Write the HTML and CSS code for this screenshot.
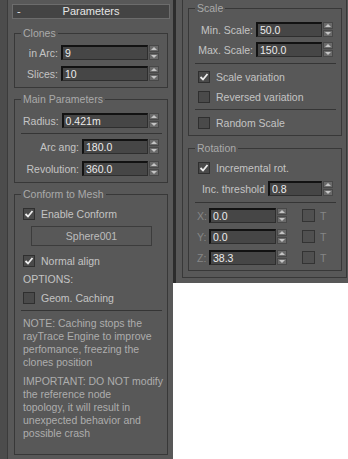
FILE: index.html
```html
<!DOCTYPE html>
<html lang="en">
<head>
    <meta charset="UTF-8">
    <title>Parameters</title>
    <link rel="stylesheet" href="styles.css">
</head>
<body>
<div class="app">
    <div class="side left">
        <div class="gutter"></div>
        <div class="rollout">
            <div class="roll-head">
                <span class="minus">-</span>
                <span class="roll-title">Parameters</span>
            </div>

            <fieldset class="group clones">
                <legend>Clones</legend>
                <div class="row mt5">
                    <label>in Arc:</label>
                    <div class="field w87">9</div>
                    <div class="spin"><span class="up"></span><span class="down"></span></div>
                </div>
                <div class="row mt6">
                    <label>Slices:</label>
                    <div class="field w87">10</div>
                    <div class="spin"><span class="up"></span><span class="down"></span></div>
                </div>
            </fieldset>

            <fieldset class="group main">
                <legend>Main Parameters</legend>
                <div class="row mt7">
                    <label>Radius:</label>
                    <div class="field w87">0.421m</div>
                    <div class="spin"><span class="up"></span><span class="down"></span></div>
                </div>
                <div class="sep sep-a"></div>
                <div class="row">
                    <label>Arc ang:</label>
                    <div class="field w66">180.0</div>
                    <div class="spin"><span class="up"></span><span class="down"></span></div>
                </div>
                <div class="row mt7">
                    <label>Revolution:</label>
                    <div class="field w66">360.0</div>
                    <div class="spin"><span class="up"></span><span class="down"></span></div>
                </div>
            </fieldset>

            <fieldset class="group conform">
                <legend>Conform to Mesh</legend>
                <div class="check mt6">
                    <span class="box on"><svg width="10" height="10" viewBox="0 0 10 10"><polyline points="1.5,5 4,7.5 8.5,2" /></svg></span>
                    <span>Enable Conform</span>
                </div>
                <div class="pick">Sphere001</div>
                <div class="check mt8">
                    <span class="box on"><svg width="10" height="10" viewBox="0 0 10 10"><polyline points="1.5,5 4,7.5 8.5,2" /></svg></span>
                    <span>Normal align</span>
                </div>
                <div class="opts">OPTIONS:</div>
                <div class="check mt5">
                    <span class="box"></span>
                    <span>Geom. Caching</span>
                </div>
                <div class="sep sep-b"></div>
                <p class="note">NOTE: Caching stops the<br>rayTrace Engine to improve<br>perfomance, freezing the<br>clones position</p>
                <p class="note">IMPORTANT: DO NOT modify<br>the reference node<br>topology, it will result in<br>unexpected behavior and<br>possible crash</p>
            </fieldset>
        </div>
    </div>

    <div class="side right">
        <div class="frame">
            <fieldset class="group scale">
                <legend>Scale</legend>
                <div class="row mt7">
                    <label>Min. Scale:</label>
                    <div class="field w66">50.0</div>
                    <div class="spin"><span class="up"></span><span class="down"></span></div>
                </div>
                <div class="row mt5">
                    <label>Max. Scale:</label>
                    <div class="field w66">150.0</div>
                    <div class="spin"><span class="up"></span><span class="down"></span></div>
                </div>
                <div class="sep sep-c"></div>
                <div class="check ind">
                    <span class="box on"><svg width="10" height="10" viewBox="0 0 10 10"><polyline points="1.5,5 4,7.5 8.5,2" /></svg></span>
                    <span>Scale variation</span>
                </div>
                <div class="check ind mt7">
                    <span class="box"></span>
                    <span>Reversed variation</span>
                </div>
                <div class="sep sep-c"></div>
                <div class="check ind">
                    <span class="box"></span>
                    <span>Random Scale</span>
                </div>
            </fieldset>

            <fieldset class="group rotation">
                <legend>Rotation</legend>
                <div class="check ind mt6">
                    <span class="box on"><svg width="10" height="10" viewBox="0 0 10 10"><polyline points="1.5,5 4,7.5 8.5,2" /></svg></span>
                    <span>Incremental rot.</span>
                </div>
                <div class="row mt7">
                    <label>Inc. threshold</label>
                    <div class="field w54">0.8</div>
                    <div class="spin"><span class="up"></span><span class="down"></span></div>
                </div>
                <div class="sep sep-d"></div>
                <div class="axis">
                    <label>X:</label>
                    <div class="field w67">0.0</div>
                    <div class="spin"><span class="up"></span><span class="down"></span></div>
                    <span class="box dim"></span>
                    <span class="t">T</span>
                </div>
                <div class="axis mt6">
                    <label>Y:</label>
                    <div class="field w67">0.0</div>
                    <div class="spin"><span class="up"></span><span class="down"></span></div>
                    <span class="box dim"></span>
                    <span class="t">T</span>
                </div>
                <div class="axis mt6">
                    <label>Z:</label>
                    <div class="field w67">38.3</div>
                    <div class="spin"><span class="up"></span><span class="down"></span></div>
                    <span class="box dim"></span>
                    <span class="t">T</span>
                </div>
            </fieldset>
        </div>
    </div>
</div>
</body>
</html>
```

FILE: styles.css
```css
*{
    margin: 0;
    padding: 0;
    box-sizing: border-box;
}
body{
    background-color: #fff;
    font-family: "Liberation Sans", Arial, sans-serif;
    font-size: 10.5px;
    color: #c4c4c4;
}
.app{
    display: flex;
    align-items: flex-start;
}
.side{
    background-color: #585858;
}
.left{
    width: 173px;
    height: 459px;
    display: flex;
}
.gutter{
    width: 8px;
    background-color: #4c4c4c;
    border-right: 1px solid #3b3b3b;
}
.rollout{
    width: 165px;
    padding: 4px 3px 0 4px;
}
.roll-head{
    height: 15px;
    display: grid;
    grid-template-columns: 1fr auto 1fr;
    align-items: center;
    background-color: #444;
    border: 1px solid #6c6c6c;
    color: #e6e6e6;
    font-size: 11px;
    line-height: 13px;
}
.minus{
    padding-left: 4px;
}

/* group boxes */
.group{
    border: 1px solid #383838;
    padding: 0 8px 6px 8px;
    min-width: 0;
}
.group legend{
    padding: 0 2px;
    margin-left: -2px;
    line-height: 13px;
    color: #aaa;
}
.left .group{
    margin: 0 2px;
}
.left .clones{ margin-top: 8px; }
.left .main{ margin-top: 5px; }
.left .conform{
    margin-top: 5px;
    padding-bottom: 14px;
}

.mt5{ margin-top: 5px; }
.mt6{ margin-top: 6px; }
.mt7{ margin-top: 7px; }
.mt8{ margin-top: 8px; }

/* spinner rows */
.row{
    height: 15px;
    display: flex;
    align-items: center;
    justify-content: flex-end;
}
.row label{
    margin-right: 3px;
}
.field{
    height: 15px;
    background-color: #464646;
    border: 1px solid #2e2e2e;
    border-top: 2px solid #121212;
    border-left: 2px solid #121212;
    color: #ececec;
    line-height: 12px;
    padding-left: 2px;
    white-space: nowrap;
}
.w87{ width: 87px; }
.w67{ width: 67px; }
.w66{ width: 66px; }
.w54{ width: 54px; }
.spin{
    width: 10px;
    height: 15px;
    margin-left: 1px;
    display: flex;
    flex-direction: column;
    justify-content: space-between;
}
.spin span{
    height: 7px;
    background-color: #6a6a6a;
    border: 1px solid #484848;
    display: flex;
    align-items: center;
    justify-content: center;
}
.spin span::after{
    content: "";
    border-left: 3px solid transparent;
    border-right: 3px solid transparent;
}
.spin .up::after{
    border-bottom: 3px solid #c4c4c4;
}
.spin .down::after{
    border-top: 3px solid #c4c4c4;
}

.sep{
    border-top: 1px solid #353535;
    margin-left: -2px;
    margin-right: -3px;
}
.sep-a{ margin-top: 5px; margin-bottom: 5px; }
.sep-b{ margin-top: 6px; }
.sep-c{ margin-top: 6px; margin-bottom: 6px; }
.sep-d{ margin-top: 6px; margin-bottom: 5px; }

/* checkboxes */
.check{
    height: 13px;
    display: flex;
    align-items: center;
}
.check.ind{
    padding-left: 1px;
}
.box{
    width: 12px;
    height: 12px;
    margin-right: 6px;
    background-color: #4a4a4a;
    border: 1px solid #2f2f2f;
    display: flex;
    align-items: center;
    justify-content: center;
    flex-shrink: 0;
}
.box svg polyline{
    fill: none;
    stroke: #eee;
    stroke-width: 1.8;
}
.box.dim{
    width: 13px;
    height: 13px;
    margin: 0 5px 0 15px;
    background-color: #505050;
    border-color: #333;
}

.pick{
    height: 20px;
    margin: 6px 7px 0 8px;
    border: 1px solid #3c3c3c;
    text-align: center;
    line-height: 18px;
    color: #bdbdbd;
}
.opts{
    line-height: 13px;
    margin-top: 6px;
}
.note{
    margin-top: 6px;
    line-height: 13px;
    color: #adadad;
    white-space: nowrap;
}

/* right panel */
.right{
    width: 175px;
    height: 283px;
    border-left: 3px solid #2c2c2c;
    padding: 0 1px 5px 6px;
}
.frame{
    border: 1px solid #383838;
    border-top: none;
    padding: 2px 4px 6px 5px;
}
.scale{
    padding-bottom: 6px;
}
.rotation{
    margin-top: 6px;
    padding-bottom: 5px;
}
.axis{
    height: 15px;
    display: flex;
    align-items: center;
}
.axis label{
    width: 12px;
    color: #868686;
}
.t{
    color: #868686;
}
```
